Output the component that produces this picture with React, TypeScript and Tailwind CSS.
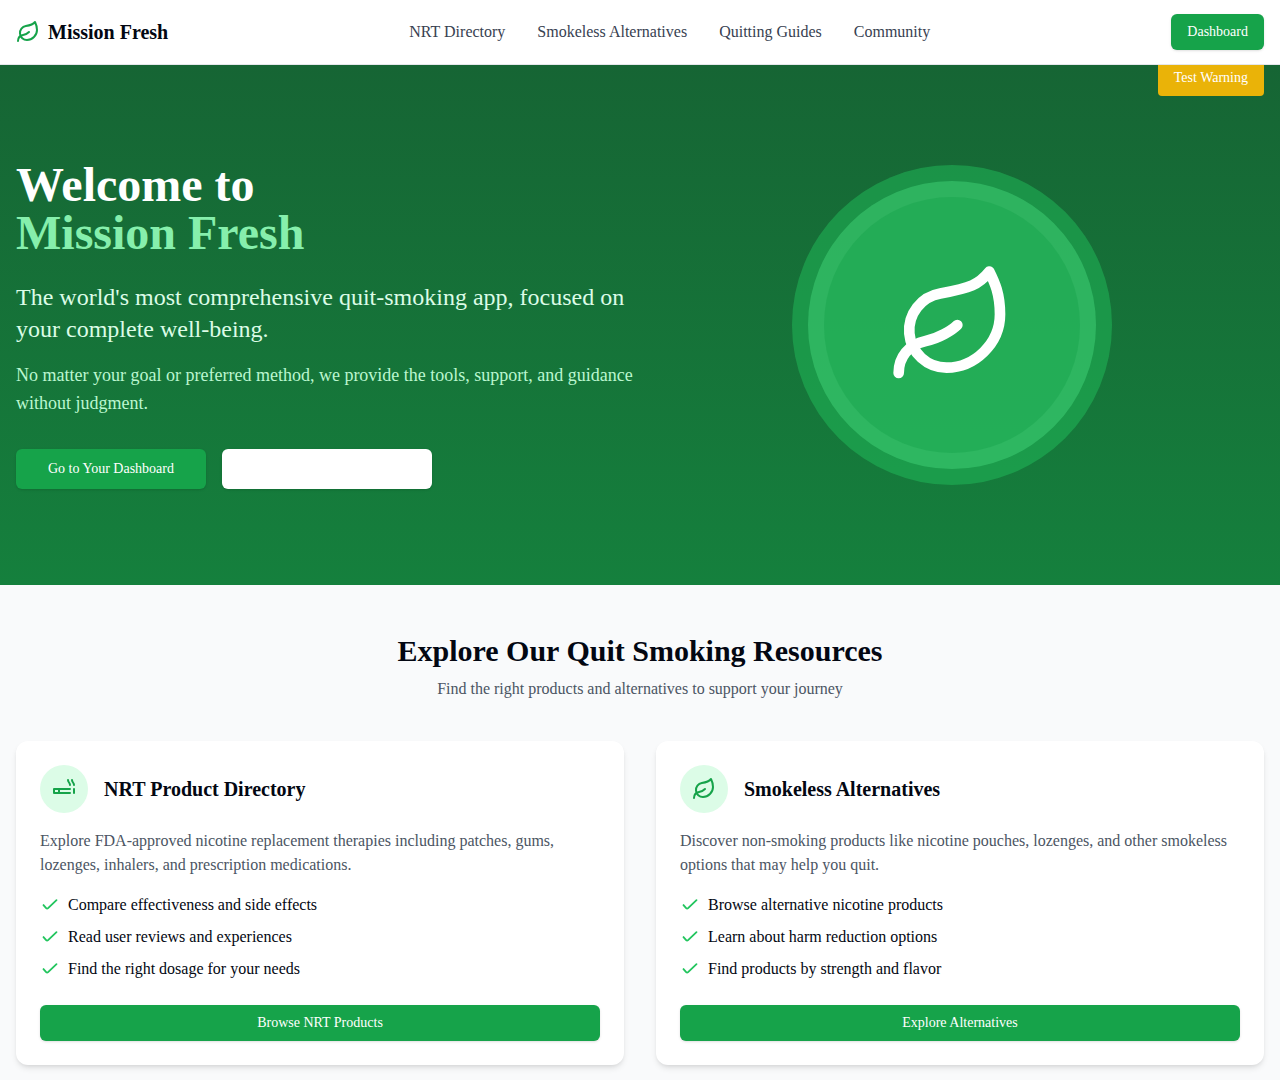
import { Leaf } from "lucide-react";
import type { ReactNode } from "react";

const navItems = ["NRT Directory", "Smokeless Alternatives", "Quitting Guides", "Community"];

function CheckIcon() {
  return (
    <svg
      className="size-5 shrink-0 text-[#22c55e]"
      viewBox="0 0 24 24"
      fill="none"
      stroke="currentColor"
      strokeWidth="2.2"
      strokeLinecap="round"
      strokeLinejoin="round"
      aria-hidden="true"
    >
      <path d="M4.2 12.1 7.4 15.7q1.1 1.2 2.3 0L19.8 6.2" />
    </svg>
  );
}

function CigaretteIcon() {
  return (
    <svg
      className="size-6"
      viewBox="0 0 24 24"
      fill="none"
      stroke="currentColor"
      strokeWidth="2"
      strokeLinecap="round"
      strokeLinejoin="round"
      aria-hidden="true"
    >
      <path d="M18 12H2v4h16" />
      <path d="M22 12v4" />
      <path d="M7 12v4" />
      <path d="M18 8c0-2.5-2-2.5-2-5" />
      <path d="M22 8c0-2.5-2-2.5-2-5" />
    </svg>
  );
}

type ResourceCardProps = {
  icon: ReactNode;
  title: string;
  description: string;
  features: string[];
  action: string;
};

function ResourceCard({ icon, title, description, features, action }: ResourceCardProps) {
  return (
    <article className="rounded-xl bg-white p-6 shadow-md">
      <div className="mb-4 flex items-center gap-4">
        <div className="flex size-12 items-center justify-center rounded-full bg-[#dcfce7] text-[#16a34a]">{icon}</div>
        <h3 className="text-xl font-bold">{title}</h3>
      </div>
      <p className="mb-4 text-[#4b5563]">{description}</p>
      <ul className="mb-6 space-y-2">
        {features.map((feature) => (
          <li key={feature} className="flex items-center gap-2">
            <CheckIcon />
            <span>{feature}</span>
          </li>
        ))}
      </ul>
      <button className="h-9 w-full rounded-md bg-[#16a34a] px-4 text-sm font-medium text-white shadow-sm">{action}</button>
    </article>
  );
}

export default function App() {
  return (
    <div className="relative min-h-screen bg-[#f9fafb] font-['Liberation_Serif',serif] text-[#030712]">
      <header className="relative z-10 border-b border-[#e5e7eb] bg-white">
        <div className="flex h-16 items-center justify-between px-4">
          <a href="#" className="flex items-center gap-2">
            <Leaf className="size-6 text-[#16a34a]" />
            <span className="text-xl font-bold">Mission Fresh</span>
          </a>
          <nav className="flex gap-8 text-[#374151]">
            {navItems.map((item) => (
              <a key={item} href="#">{item}</a>
            ))}
          </nav>
          <button className="h-9 rounded-md bg-[#16a34a] px-4 text-sm font-medium text-white shadow-sm">Dashboard</button>
        </div>
      </header>
      <button className="absolute top-15 right-4 h-9 rounded bg-[#eab308] px-4 text-sm text-white">Test Warning</button>
      <main>
        <section className="bg-linear-to-b/srgb from-[#166534] to-[#15803d] px-4 py-24">
          <div className="grid grid-cols-2 items-center">
            <div>
              <h1 className="mb-6 text-5xl leading-none font-bold text-white">
                Welcome to
                <span className="block text-[#86efac]">Mission Fresh</span>
              </h1>
              <p className="mb-4 text-2xl text-[#dcfce7]">
                The world's most comprehensive quit-smoking app, focused on your complete well-being.
              </p>
              <p className="mb-8 text-lg text-[#bbf7d0]">
                No matter your goal or preferred method, we provide the tools, support, and guidance without judgment.
              </p>
              <div className="flex gap-4">
                <button className="h-10 rounded-md bg-[#16a34a] px-8 text-sm font-medium text-white shadow-sm">Go to Your Dashboard</button>
                <button aria-label="Explore resources" className="h-10 w-[210px] rounded-md bg-white shadow-sm" />
              </div>
            </div>
            <div className="flex justify-center">
              <div className="size-80 rounded-full bg-[#22c55e]/46 p-4">
                <div className="size-full rounded-full bg-[#4ade80]/42 p-4">
                  <div className="flex size-full items-center justify-center rounded-full bg-[#16a34a]/42">
                    <Leaf className="size-32 text-white" />
                  </div>
                </div>
              </div>
            </div>
          </div>
        </section>
        <section className="px-4 py-12">
          <div className="mb-10 text-center">
            <h2 className="mb-2 text-3xl font-bold">Explore Our Quit Smoking Resources</h2>
            <p className="text-[#4b5563]">Find the right products and alternatives to support your journey</p>
          </div>
          <div className="grid grid-cols-2 gap-8">
            <ResourceCard
              icon={<CigaretteIcon />}
              title="NRT Product Directory"
              description="Explore FDA-approved nicotine replacement therapies including patches, gums, lozenges, inhalers, and prescription medications."
              features={["Compare effectiveness and side effects", "Read user reviews and experiences", "Find the right dosage for your needs"]}
              action="Browse NRT Products"
            />
            <ResourceCard
              icon={<Leaf className="size-6" />}
              title="Smokeless Alternatives"
              description="Discover non-smoking products like nicotine pouches, lozenges, and other smokeless options that may help you quit."
              features={["Browse alternative nicotine products", "Learn about harm reduction options", "Find products by strength and flavor"]}
              action="Explore Alternatives"
            />
          </div>
        </section>
      </main>
    </div>
  );
}
